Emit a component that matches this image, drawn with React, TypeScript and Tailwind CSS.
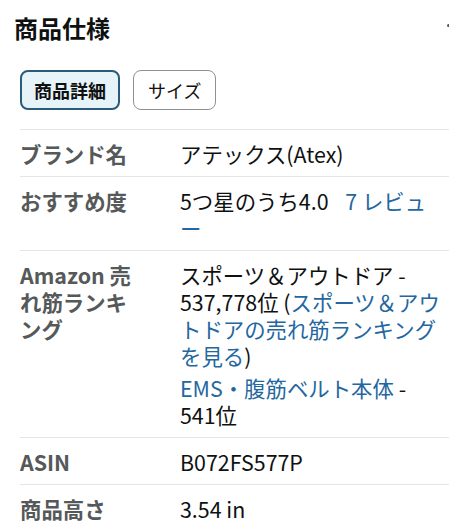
const rows: { label: string; value: React.ReactNode }[] = [
  { label: 'ブランド名', value: <p>アテックス(Atex)</p> },
  {
    label: 'おすすめ度',
    value: (
      <p>
        5つ星のうち4.0 <a className="ml-[12px] text-[#2467a0]">7 レビュー</a>
      </p>
    ),
  },
  {
    label: 'Amazon 売れ筋ランキング',
    value: (
      <div className="flex flex-col gap-[5px]">
        <p>
          スポーツ＆アウトドア - 537,778位 (
          <a className="text-[#2467a0]">スポーツ＆アウトドアの売れ筋ランキングを見る</a>)
        </p>
        <p>
          <a className="text-[#2467a0]">EMS・腹筋ベルト本体</a> - 541位
        </p>
      </div>
    ),
  },
  { label: 'ASIN', value: <p>B072FS577P</p> },
  { label: '商品高さ', value: <p>3.54 in</p> },
]

export default function App() {
  return (
    <div className="w-[449px] h-[529px] overflow-hidden bg-white font-['Noto_Sans_CJK_JP','Noto_Sans',sans-serif] text-[#0f1111]">
      <div className="flex items-center justify-between pl-[14px] pt-[12px]">
        <h2 className="text-[24px] leading-[32px] font-bold">商品仕様</h2>
        <span className="mr-[-1px] mt-[-6px] h-[3px] w-[3px] rounded-full bg-[#555]" />
      </div>

      <div className="flex gap-[13px] pl-[20px] pt-[26px]">
        <button className="h-[40px] rounded-[8px] border-2 border-[#2a5b7a] bg-[#e6f4fa] px-[12px] text-[18px] font-bold leading-none">
          商品詳細
        </button>
        <button className="h-[40px] rounded-[8px] border border-[#8d9096] bg-white px-[14px] text-[18px] leading-none">
          サイズ
        </button>
      </div>

      <div className="ml-[20px] mt-[19px] border-t border-[#e3e6e6]">
        {rows.map((r) => (
          <div
            key={r.label}
            className="grid grid-cols-[116px_1fr] gap-x-[44px] border-b border-[#e3e6e6] pt-[10px] pb-[9px] pr-[8px] text-[21.4px] leading-[27px] last:border-b-0"
          >
            <div className="font-bold text-[#565959]">{r.label}</div>
            <div>{r.value}</div>
          </div>
        ))}
      </div>
    </div>
  )
}
